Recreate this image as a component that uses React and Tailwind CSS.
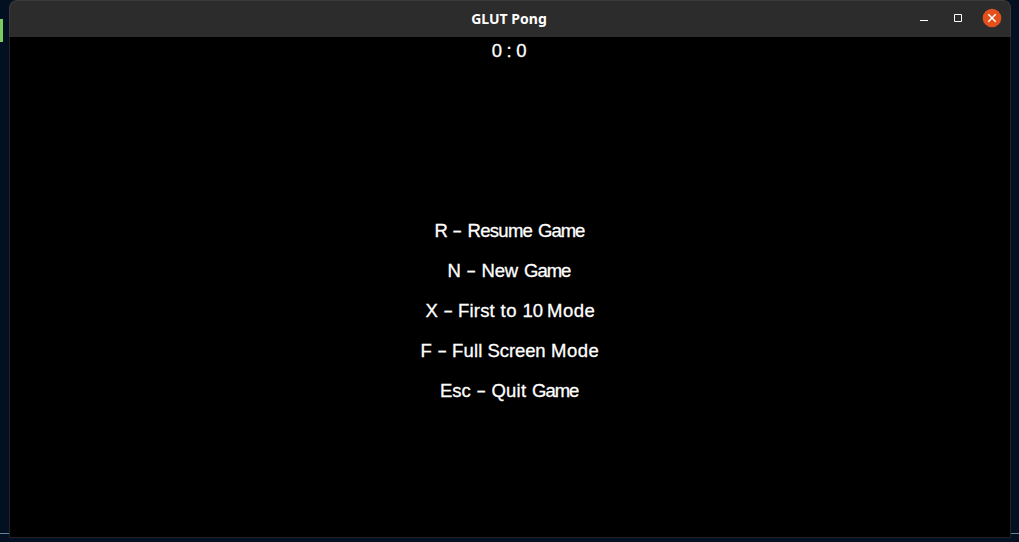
const dash = "text-[15px] font-bold";

const menu = [
  [
    ["R", "w-[18.5px]"],
    ["–", `w-[14.5px] ${dash}`],
    ["Resume", "w-[70.5px] tracking-[-0.7px]"],
    ["Game", "w-[47.5px] tracking-[-1px]"],
  ],
  [
    ["N", "w-[19.5px]"],
    ["–", `w-[14.5px] ${dash}`],
    ["New", "w-[42.5px] tracking-[-0.2px]"],
    ["Game", "w-[48.5px] tracking-[-1px]"],
  ],
  [
    ["X", "w-[18.5px]"],
    ["–", `w-[14px] ${dash}`],
    ["First", "w-[42.5px] tracking-[0.2px]"],
    ["to", "w-[22px] tracking-[0.6px]"],
    ["10", "w-[24.5px]"],
    ["Mode", "w-[47.5px] tracking-[0.5px]"],
  ],
  [
    ["F", "w-[17.5px]"],
    ["–", `w-[14px] ${dash}`],
    ["Full", "w-[35.5px] tracking-[0.2px]"],
    ["Screen", "w-[63.5px] tracking-[-0.1px]"],
    ["Mode", "w-[48.5px] tracking-[0.5px]"],
  ],
  [
    ["Esc", "w-[37px]"],
    ["–", `w-[14.5px] ${dash}`],
    ["Quit", "w-[40.5px] tracking-[0.2px]"],
    ["Game", "w-[48px] tracking-[-1px]"],
  ],
];

function TitleBar() {
  return (
    <header className="grid h-[37px] grid-cols-3 items-center rounded-t-lg border border-b-0 border-[#3a3a3a] bg-[#2c2c2c] pb-0.5 text-white">
      <span />
      <h1 className="pt-0.5 pr-0.5 text-center font-['Noto_Sans',sans-serif] text-[14px] leading-5 font-bold">GLUT Pong</h1>
      <div className="flex items-center justify-end pr-[8px]">
        <button aria-label="Minimize" className="mr-[26px]">
          <svg width="8" height="8" className="block"><path d="M0 6.5h8" stroke="#fff" /></svg>
        </button>
        <button aria-label="Maximize" className="mr-[20px]">
          <svg width="8" height="8" className="block"><path d="M.5.5h7v7h-7z" fill="none" stroke="#fff" /></svg>
        </button>
        <button aria-label="Close">
          <svg width="20" height="20" className="block">
            <circle cx="10" cy="10" r="9.3" fill="#e4501c" />
            <path d="m6.3 6.3 7.4 7.4m0-7.4-7.4 7.4" stroke="#fff" strokeWidth="1.5" />
          </svg>
        </button>
      </div>
    </header>
  );
}

export default function App() {
  return (
    <div className="flex h-[542px] w-[1019px] overflow-hidden bg-[#021022]">
      <div className="flex w-[9px] flex-col justify-between pt-[19px] pb-2">
        <div className="h-[23px] w-[3px] bg-[#78cc60]" />
        <div className="h-px bg-[#6282a2]" />
      </div>
      <div className="flex h-[538px] w-[1002px] flex-col">
        <TitleBar />
        <main className="flex-1 border border-t-0 border-[#222] bg-black font-['Liberation_Sans',Arial,sans-serif] text-[18.5px] text-white [-webkit-text-stroke:0.3px_white]">
          <p className="pt-1 pr-0.5 text-center leading-5 tracking-[-0.3px]">0 : 0</p>
          <div className="pt-[150px]">
            {menu.map((words, i) => (
              <p key={i} className="flex h-10 justify-center leading-10 whitespace-pre">
                {words.map(([text, style], j) => (
                  <span key={j} className={style}>{text}{j < words.length - 1 ? " " : ""}</span>
                ))}
              </p>
            ))}
          </div>
        </main>
      </div>
      <div className="flex flex-1 flex-col justify-end pb-2">
        <div className="h-px bg-[#6282a2]" />
      </div>
    </div>
  );
}
